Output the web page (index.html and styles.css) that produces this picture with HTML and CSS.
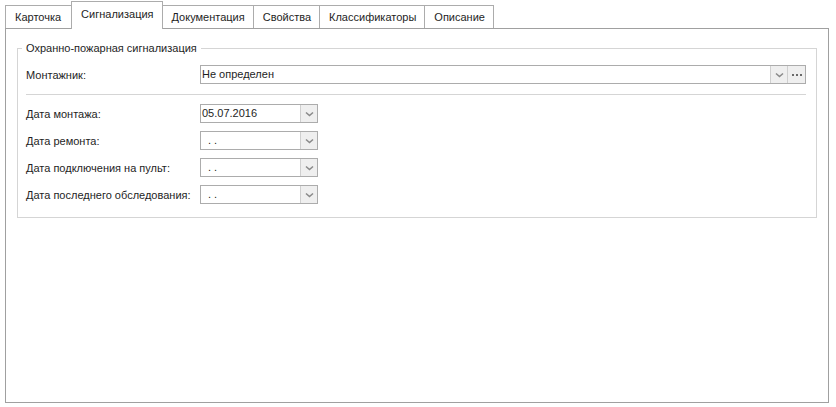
FILE: index.html
```html
<!DOCTYPE html>
<html lang="ru">
<head>
    <meta charset="UTF-8">
    <title>Охранно-пожарная сигнализация</title>
    <link rel="stylesheet" href="styles.css">
</head>
<body>
    <div class="tabs">
        <div class="tab-strip">
            <div class="tab">Карточка</div>
            <div class="tab active">Сигнализация</div>
            <div class="tab">Документация</div>
            <div class="tab">Свойства</div>
            <div class="tab">Классификаторы</div>
            <div class="tab">Описание</div>
        </div>
        <div class="tab-page">
            <fieldset class="group">
                <legend>Охранно-пожарная сигнализация</legend>
                <div class="row">
                    <label>Монтажник:</label>
                    <div class="combo wide">
                        <span class="value">Не определен</span>
                        <span class="btn drop"><svg width="9" height="6" viewBox="0 0 9 6"><path d="M1 1.5 L4.5 4.5 L8 1.5" fill="none" stroke="#8a8a8a" stroke-width="1.6"/></svg></span>
                        <span class="btn more"><svg width="10" height="2" viewBox="0 0 10 2"><rect x="0" y="0" width="2" height="2" fill="#6a6a6a"/><rect x="4" y="0" width="2" height="2" fill="#6a6a6a"/><rect x="8" y="0" width="2" height="2" fill="#6a6a6a"/></svg></span>
                    </div>
                </div>
                <hr class="sep">
                <div class="dates">
                    <div class="row">
                        <label>Дата монтажа:</label>
                        <div class="combo date">
                            <span class="value">05.07.2016</span>
                            <span class="btn drop"><svg width="9" height="6" viewBox="0 0 9 6"><path d="M1 1.5 L4.5 4.5 L8 1.5" fill="none" stroke="#8a8a8a" stroke-width="1.6"/></svg></span>
                        </div>
                    </div>
                    <div class="row">
                        <label>Дата ремонта:</label>
                        <div class="combo date">
                            <span class="value empty">. .</span>
                            <span class="btn drop"><svg width="9" height="6" viewBox="0 0 9 6"><path d="M1 1.5 L4.5 4.5 L8 1.5" fill="none" stroke="#8a8a8a" stroke-width="1.6"/></svg></span>
                        </div>
                    </div>
                    <div class="row">
                        <label>Дата подключения на пульт:</label>
                        <div class="combo date">
                            <span class="value empty">. .</span>
                            <span class="btn drop"><svg width="9" height="6" viewBox="0 0 9 6"><path d="M1 1.5 L4.5 4.5 L8 1.5" fill="none" stroke="#8a8a8a" stroke-width="1.6"/></svg></span>
                        </div>
                    </div>
                    <div class="row">
                        <label>Дата последнего обследования:</label>
                        <div class="combo date">
                            <span class="value empty">. .</span>
                            <span class="btn drop"><svg width="9" height="6" viewBox="0 0 9 6"><path d="M1 1.5 L4.5 4.5 L8 1.5" fill="none" stroke="#8a8a8a" stroke-width="1.6"/></svg></span>
                        </div>
                    </div>
                </div>
            </fieldset>
        </div>
    </div>
</body>
</html>
```

FILE: styles.css
```css
html, body {
    height: 100%;
}
body {
    margin: 0;
    font-family: "Liberation Sans", Arial, sans-serif;
    font-size: 11px;
    color: #1e1e1e;
    background: #fff;
}
.tabs {
    box-sizing: border-box;
    height: 100%;
    padding: 2px 7px 4px 5px;
    display: flex;
    flex-direction: column;
}
.tab-strip {
    display: flex;
    align-items: flex-end;
    height: 26px;
    position: relative;
    z-index: 1;
}
.tab {
    height: 22px;
    line-height: 23px;
    padding: 0 8px 0 9px;
    border: 1px solid #acacac;
    border-bottom: 0;
    border-left-width: 0;
    background: #fff;
    color: #1e1e1e;
}
.tab:first-child {
    border-left-width: 1px;
    padding-right: 10px;
}
.tab.active {
    height: 27px;
    line-height: 24px;
    margin-bottom: -1px;
    border-left-width: 1px;
    margin-left: -1px;
}
.tab.active + .tab {
    border-left-width: 0;
}
.tab-page {
    flex: 1;
    border: 1px solid #a0a0a0;
    padding: 13px 11px 0 11px;
}
/* group box with caption in the frame */
.group {
    margin: 0;
    border: 1px solid #d5d5d5;
    padding: 10px 10px 13px 8px;
}
.group legend {
    margin-left: -4px;
    padding: 0 4px;
    line-height: 13px;
}
.row {
    display: flex;
    align-items: center;
    height: 19px;
}
.row label {
    width: 174px;
    flex: none;
}
.sep {
    border: 0;
    border-top: 1px solid #d5d5d5;
    margin: 10px 0 9px 0;
}
.dates {
    display: grid;
    gap: 8px;
}
.combo {
    box-sizing: border-box;
    height: 19px;
    border: 1px solid #acacac;
    display: flex;
    align-items: stretch;
    background: #fff;
}
.combo.wide {
    flex: 1;
}
.combo.date {
    width: 118px;
}
.combo .value {
    flex: 1;
    line-height: 17px;
    padding-left: 1px;
    white-space: nowrap;
}
.combo .value.empty {
    padding-left: 7px;
}
.btn {
    width: 16px;
    flex: none;
    background: #efefef;
    border-left: 1px solid #cfcfcf;
    display: flex;
    align-items: center;
    justify-content: center;
}
.btn.more {
    width: 17px;
}
```
